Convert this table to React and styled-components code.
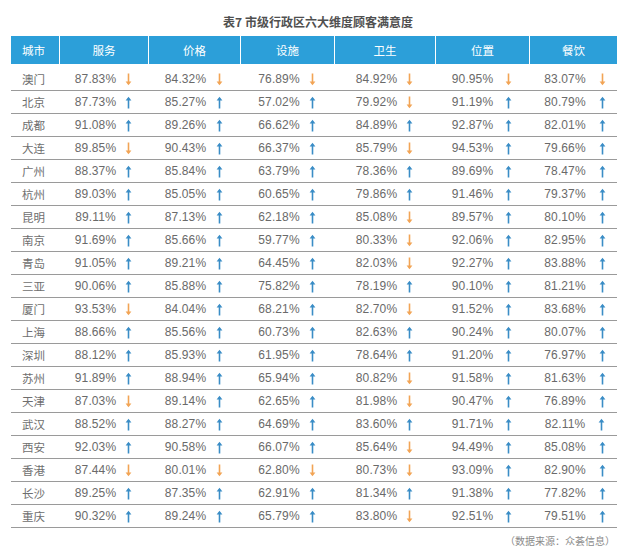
import React from "react";
import styled, { createGlobalStyle } from "styled-components";

const Global = createGlobalStyle`
  html, body { margin: 0; padding: 0; background: #fff; }
  body { font-family: "Liberation Sans", "Noto Sans CJK SC", sans-serif; }
`;

const COLS = "48px 89px 92px 94px 101px 94px 88px";

const Page = styled.div`
  width: 635px;
  height: 558px;
  padding: 0 18px 0 11px;
  box-sizing: border-box;
  display: flex;
  flex-direction: column;
`;

const Title = styled.div`
  padding-top: 14px;
  height: 16px;
  line-height: 16px;
  margin-bottom: 6px;
  text-align: center;
  font-family: "Noto Sans CJK SC", sans-serif;
  font-weight: 700;
  font-size: 12px;
  color: #505050;
  padding-left: 8px;
`;

const HeadRow = styled.div`
  display: grid;
  grid-template-columns: ${COLS};
  height: 28px;
  background: #2c9fd9;
  margin-bottom: 4px;
`;

const HeadCell = styled.div`
  display: flex;
  align-items: center;
  justify-content: ${(p) => (p.$left ? "flex-start" : "center")};
  padding-left: ${(p) => (p.$left ? "11px" : "0")};
  border-left: ${(p) => (p.$left ? "none" : "1.5px solid #fff")};
  color: #fff;
  font-family: "Noto Sans CJK SC", sans-serif;
  font-size: 11.5px;
`;

const Row = styled.div`
  display: grid;
  grid-template-columns: ${COLS};
  height: 22px;
  border-bottom: 1px solid #9a9a9a;
`;

const City = styled.div`
  display: flex;
  align-items: center;
  padding-left: 11px;
  font-family: "Noto Sans CJK SC", sans-serif;
  font-size: 11.5px;
  color: #6e6e6e;
`;

const Cell = styled.div`
  display: flex;
  align-items: center;
  justify-content: center;
  gap: ${(p) => p.$gap}px;
  padding-left: ${(p) => p.$shift}px;
`;

const Num = styled.span`
  font-size: 12px;
  color: #6a6a6a;
  letter-spacing: 0.1px;
`;

const Footer = styled.div`
  margin-top: 6px;
  text-align: right;
  font-family: "Noto Sans CJK SC", sans-serif;
  font-size: 10px;
  line-height: 14px;
  color: #8a8a8a;
  padding-right: 2px;
`;

const Arrow = ({ up }) => {
  const c = up ? "#3a8dc6" : "#f2a455";
  return (
    <svg width="7" height="13" viewBox="0 0 7 13">
      {up ? (
        <>
          <line x1="3.5" y1="2" x2="3.5" y2="12.5" stroke={c} strokeWidth="1.6" />
          <path d="M0.6 4.6 L3.5 0.8 L6.4 4.6 Z" fill={c} />
        </>
      ) : (
        <>
          <line x1="3.5" y1="0.5" x2="3.5" y2="11" stroke={c} strokeWidth="1.6" />
          <path d="M0.6 8.4 L3.5 12.2 L6.4 8.4 Z" fill={c} />
        </>
      )}
    </svg>
  );
};

const headers = ["城市", "服务", "价格", "设施", "卫生", "位置", "餐饮"];
const gaps = [9, 10, 9, 9, 12, 13];
const shifts = [0, 0, 0, 0, 0, 4];

const raw = `澳门 87.83d 84.32d 76.89d 84.92d 90.95d 83.07d
北京 87.73u 85.27u 57.02u 79.92d 91.19u 80.79u
成都 91.08u 89.26u 66.62u 84.89u 92.87u 82.01u
大连 89.85d 90.43u 66.37u 85.79d 94.53u 79.66u
广州 88.37u 85.84u 63.79u 78.36u 89.69u 78.47u
杭州 89.03u 85.05u 60.65u 79.86u 91.46u 79.37u
昆明 89.11u 87.13u 62.18u 85.08d 89.57u 80.10u
南京 91.69u 85.66u 59.77u 80.33d 92.06u 82.95u
青岛 91.05u 89.21u 64.45u 82.03d 92.27u 83.88u
三亚 90.06u 85.88u 75.82u 78.19u 90.10u 81.21u
厦门 93.53d 84.04u 68.21u 82.70d 91.52u 83.68u
上海 88.66u 85.56u 60.73u 82.63u 90.24u 80.07u
深圳 88.12u 85.93u 61.95u 78.64u 91.20u 76.97u
苏州 91.89u 88.94u 65.94u 80.82d 91.58u 81.63u
天津 87.03d 89.14u 62.65u 81.98d 90.47u 76.89u
武汉 88.52u 88.27u 64.69u 83.60u 91.71u 82.11u
西安 92.03u 90.58u 66.07u 85.64d 94.49u 85.08u
香港 87.44d 80.01d 62.80d 80.73d 93.09u 82.90u
长沙 89.25u 87.35u 62.91u 81.34u 91.38u 77.82u
重庆 90.32u 89.24u 65.79u 83.80d 92.51u 79.51u`;

const rows = raw.split("\n").map((line) => {
  const [city, ...vals] = line.trim().split(" ");
  return {
    city,
    vals: vals.map((v) => ({ n: v.slice(0, -1), up: v.endsWith("u") })),
  };
});

export default function App() {
  return (
    <>
      <Global />
      <Page>
        <Title>表7 市级行政区六大维度顾客满意度</Title>
        <HeadRow>
          {headers.map((h, i) => (
            <HeadCell key={h} $left={i === 0}>
              {h}
            </HeadCell>
          ))}
        </HeadRow>
        {rows.map((r) => (
          <Row key={r.city}>
            <City>{r.city}</City>
            {r.vals.map((v, i) => (
              <Cell key={i} $gap={gaps[i]} $shift={shifts[i]}>
                <Num>{v.n}%</Num>
                <Arrow up={v.up} />
              </Cell>
            ))}
          </Row>
        ))}
        <Footer>（数据来源：众荟信息）</Footer>
      </Page>
    </>
  );
}
